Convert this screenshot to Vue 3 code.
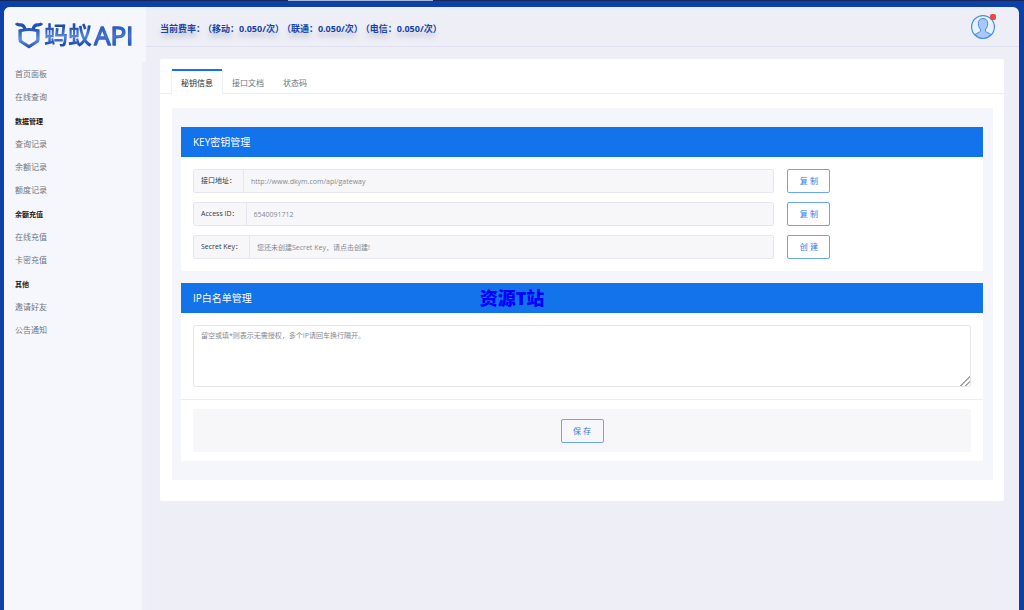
<script setup>
import { ref } from 'vue'

const groups = [
  { title: '', items: ['首页面板', '在线查询'] },
  { title: '数据管理', items: ['查询记录', '余额记录', '额度记录'] },
  { title: '余额充值', items: ['在线充值', '卡密充值'] },
  { title: '其他', items: ['邀请好友', '公告通知'] }
]
const rates = ['移动', '联通', '电信']
const tabs = ['秘钥信息', '接口文档', '状态码']
const active = ref(0)
const fields = [
  { id: 'gateway', label: '接口地址：', value: 'http://www.dkym.com/api/gateway', action: '复 制' },
  { id: 'access', label: 'Access ID：', value: '6540091712', action: '复 制' },
  { id: 'secret', label: 'Secret Key：', value: '您还未创建Secret Key，请点击创建!', action: '创 建' }
]
</script>

<template>
  <div class="page">
    <div class="strip"><span class="strip-tab"></span></div>
    <div class="shell">
      <aside class="sidebar">
        <a class="logo" href="#">
          <svg class="logo-mark" width="28" height="28" viewBox="0 0 28 28" fill="none" aria-hidden="true">
            <defs>
              <linearGradient id="mark" x1="0" y1="0" x2="0" y2="1">
                <stop offset="0" stop-color="#1d4fb4" />
                <stop offset="0.55" stop-color="#5f8fdf" />
                <stop offset="1" stop-color="#1d4db2" />
              </linearGradient>
            </defs>
            <path d="M1.2 2.2Q2.2 4 4.8 3.8C8 3.6 9.4 5 9.8 8M26.8 2.2Q25.8 4 23.2 3.8C20 3.6 18.6 5 18.2 8" stroke="#1f51b6" stroke-width="3.2" />
            <path fill="url(#mark)" fill-rule="evenodd" d="M3.4 8.6Q14 5.2 24.6 8.6V18.4Q24.6 20.8 22.6 22L14 27.4L5.4 22Q3.4 20.8 3.4 18.4ZM6.8 11V17.8Q6.8 19.4 8.2 20.2L14 23.8L19.8 20.2Q21.2 19.4 21.2 17.8V11Q14 8.8 6.8 11Z" />
          </svg>
          <span class="logo-cn">蚂蚁</span><span class="logo-en">API</span>
        </a>
        <nav class="nav">
          <div v-for="g in groups" :key="g.title" class="group">
            <h2 v-if="g.title" class="group-title">{{ g.title }}</h2>
            <a v-for="i in g.items" :key="i" class="nav-item" href="#">{{ i }}</a>
          </div>
        </nav>
      </aside>

      <div class="main">
        <header class="topbar">
          <p class="rates">
            <span>当前费率：</span>
            <span v-for="r in rates" :key="r" class="rate">（{{ r }}：0.050/次）</span>
          </p>
          <button class="avatar" type="button" aria-label="账户">
            <svg width="26" height="26" viewBox="0 0 26 26" aria-hidden="true">
              <circle cx="13" cy="13" r="11.4" fill="#e9f1fd" stroke="#3f8cf0" stroke-width="1.2" />
              <path d="M13 4.6C16.3 4.6 17.7 6.7 17.7 9.5C17.7 12.2 16.8 13.9 15.6 15.1V17.3C16.2 18.7 19.4 19 20.9 20.4Q17.6 24.4 13 24.4T5.1 20.4C6.6 19 9.8 18.7 10.4 17.3V15.1C9.2 13.9 8.3 12.2 8.3 9.5C8.3 6.7 9.7 4.6 13 4.6Z" fill="#a9c8f7" stroke="#3f8cf0" stroke-width="1" />
            </svg>
            <span class="badge"></span>
          </button>
        </header>

        <main class="card">
          <div class="tabs" role="tablist">
            <button
              v-for="(t, n) in tabs" :key="t" type="button" role="tab"
              :aria-selected="active === n" :class="['tab', { on: active === n }]"
              @click="active = n"
            >{{ t }}</button>
          </div>
          <div class="panel">
            <section class="box">
              <h3 class="box-title">KEY密钥管理</h3>
              <div class="rows">
                <div v-for="f in fields" :key="f.id" class="row">
                  <div class="field">
                    <label class="prefix" :for="f.id">{{ f.label }}</label>
                    <input :id="f.id" class="input" type="text" :placeholder="f.value" disabled>
                  </div>
                  <button class="btn" type="button">{{ f.action }}</button>
                </div>
              </div>
            </section>
            <section class="box">
              <h3 class="box-title">IP白名单管理</h3>
              <div class="area-wrap">
                <textarea class="area" aria-label="IP白名单管理" placeholder="留空或填*则表示无需授权，多个IP请回车换行隔开。"></textarea>
              </div>
              <div class="foot">
                <div class="foot-inner"><button class="btn" type="button">保 存</button></div>
              </div>
            </section>
          </div>
        </main>
      </div>
    </div>
    <div class="watermark">资源T站</div>
  </div>
</template>

<style>
body {
  background: #0d3fa9;
}
</style>

<style scoped>
.page {
  position: relative;
  display: flex;
  flex-direction: column;
  min-height: 100vh;
  box-sizing: border-box;
  overflow: hidden;
  background: #0d3fa9;
  font-family: "Open Sans", "Noto Sans CJK SC", sans-serif;
  font-size: 8px;
  color: #6b7078;
}
.page * {
  box-sizing: border-box;
}
.strip {
  height: 1px;
  background: #14265a;
}
.strip-tab {
  display: block;
  width: 145px;
  height: 1px;
  margin-left: 288px;
  background: #a3b4d8;
}
.shell {
  flex: 1;
  display: flex;
  margin: 6px 5px 0 4px;
  border-radius: 6px 6px 0 0;
  overflow: hidden;
  background: #eeeff6;
}
.sidebar {
  flex: none;
  display: flex;
  flex-direction: column;
  width: 142px;
  background: #f6f7fd;
}
.logo {
  display: flex;
  align-items: center;
  height: 55px;
  padding-left: 11px;
  text-decoration: none;
  line-height: 28px;
}
.logo-mark {
  flex: none;
  margin-right: 1px;
}
.logo-cn,
.logo-en {
  background: linear-gradient(#1b4cb0 20%, #5686dc 55%, #1b4cb0 85%);
  background-clip: text;
  color: transparent;
}
.logo-cn {
  font-size: 24px;
  font-weight: 700;
}
.logo-en {
  margin-left: 2px;
  font-size: 26px;
  font-weight: 400;
  -webkit-text-stroke: 1px #3365c6;
}
.nav {
  flex: 1;
  padding-left: 11px;
  border-right: 4px solid #eeeff8;
}
.group-title {
  height: 20px;
  margin: 4px 0 0;
  font-size: 7px;
  font-weight: 700;
  line-height: 20px;
  color: #17191e;
}
.nav-item {
  display: block;
  height: 23px;
  line-height: 23px;
  color: #70757e;
  text-decoration: none;
}
.main {
  flex: 1;
  min-width: 0;
}
.topbar {
  display: flex;
  align-items: center;
  justify-content: space-between;
  height: 40px;
  padding: 0 23px 0 14px;
  border-bottom: 1px solid #dfe0f2;
}
.rates {
  display: flex;
  margin: 5px 0 0;
  font-size: 9px;
  font-weight: 700;
  line-height: 16px;
  color: #1745a8;
  text-shadow: 0 5px 5px rgba(60, 70, 120, 0.25);
}
.rate {
  margin-left: -2px;
}
.avatar {
  position: relative;
  display: flex;
  padding: 0;
  border: 0;
  background: none;
}
.badge {
  position: absolute;
  top: 0;
  right: 0;
  width: 6px;
  height: 6px;
  border-radius: 2px;
  background: #ea4a3d;
}
.card {
  margin: 12px 15px 0 14px;
  padding: 10px 0 21px;
  border-radius: 2px;
  background: #fff;
}
.tabs {
  display: flex;
  gap: 1px;
  height: 25px;
  padding-left: 12px;
  border-bottom: 1px solid #ecedf2;
}
.tab {
  height: 25px;
  padding: 0 9px;
  border: 0;
  border-top: 2px solid transparent;
  background: none;
  font: inherit;
  line-height: 23px;
  color: #70757e;
}
.tab.on {
  border-top-color: #1273eb;
  background: #fff;
  box-shadow: 1px 0 #ecf1f8, -1px 0 #ecf1f8;
  color: #25282e;
}
.panel {
  display: flex;
  flex-direction: column;
  gap: 12px;
  margin: 14px 11px 0 12px;
  padding: 19px 10px 19px 9px;
  background: #f5f6fc;
}
.box {
  border-radius: 0 0 2px 2px;
  background: #fff;
}
.box-title {
  margin: 0;
  padding-left: 12px;
  background: #1273eb;
  font-size: 10px;
  font-weight: 400;
  line-height: 30px;
  color: #fff;
}
.rows {
  display: grid;
  gap: 9px;
  padding: 12px;
}
.row {
  display: grid;
  grid-template-columns: 76fr 24fr;
  gap: 13px;
}
.field {
  display: flex;
  height: 24px;
  border: 1px solid #e5e6f0;
  border-radius: 2px;
  background: #f7f7fa;
  font-size: 7px;
}
.prefix {
  padding: 0 7px;
  border-right: 1px solid #e5e6f0;
  line-height: 22px;
  color: #33363d;
}
.input {
  flex: 1;
  min-width: 0;
  padding: 0 7px;
  border: 0;
  background: none;
  font: inherit;
}
.input::placeholder,
.area::placeholder {
  color: #83888f;
  opacity: 1;
}
.btn {
  width: 43px;
  height: 24px;
  padding: 0;
  border: 1px solid #6aa6f5;
  border-radius: 2px;
  background: none;
  font: inherit;
  line-height: 20px;
  color: #2a7bec;
}
.area-wrap {
  padding: 12px;
  border-bottom: 1px solid #ecedf2;
}
.area {
  display: block;
  width: 100%;
  height: 62px;
  padding: 4px 7px;
  border: 1px solid #e5e6f0;
  border-radius: 2px;
  background: #fff;
  font-family: inherit;
  font-size: 7px;
  line-height: 11px;
  resize: vertical;
}
.area::-webkit-resizer {
  background: linear-gradient(135deg, transparent 66%, #a5a7ad 66%, #a5a7ad 72%, transparent 72%, transparent 82%, #a5a7ad 82%, #a5a7ad 88%, transparent 88%);
}
.foot {
  padding: 9px 12px;
}
.foot-inner {
  display: flex;
  align-items: center;
  justify-content: center;
  height: 43px;
  border-radius: 2px;
  background: #f7f7fa;
}
.watermark {
  position: absolute;
  top: 288px;
  left: 0;
  right: 0;
  text-align: center;
  font-size: 18px;
  font-weight: 900;
  line-height: 20px;
  color: #0000ff;
  pointer-events: none;
}
</style>
